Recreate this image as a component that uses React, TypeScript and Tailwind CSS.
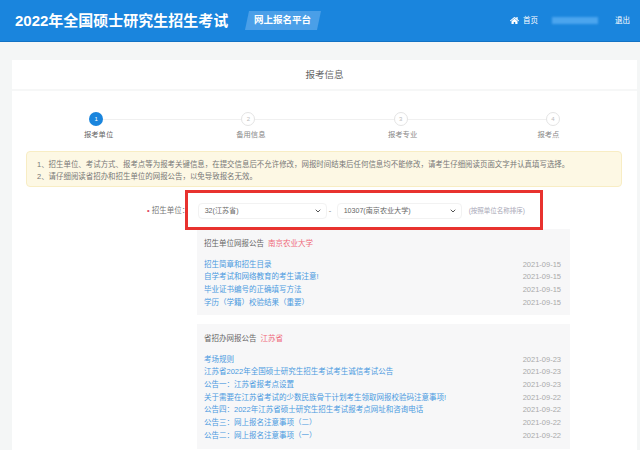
import { ChevronDown } from 'lucide-react';
import { FaHome } from 'react-icons/fa';

const font = { fontFamily: '"Liberation Sans", "Noto Sans CJK SC", sans-serif' };

const steps = [
  { label: '报考单位', nudge: 'ml-[5px]' },
  { label: '备用信息', nudge: 'ml-[5px]' },
  { label: '报考专业', nudge: 'ml-[4px]' },
  { label: '报考点', nudge: '-ml-[9px]' },
];

const unitNotices = [
  ['招生简章和招生目录', '2021-09-15'],
  ['自学考试和网络教育的考生请注意!', '2021-09-15'],
  ['毕业证书编号的正确填写方法', '2021-09-15'],
  ['学历（学籍）校验结果（重要）', '2021-09-15'],
];

const provinceNotices = [
  ['考场规则', '2021-09-23'],
  ['江苏省2022年全国硕士研究生招生考试考生诚信考试公告', '2021-09-23'],
  ['公告一：江苏省报考点设置', '2021-09-23'],
  ['关于需要在江苏省考试的少数民族骨干计划考生领取网报校验码注意事项!', '2021-09-22'],
  ['公告四：2022年江苏省硕士研究生招生考试报考点网址和咨询电话', '2021-09-22'],
  ['公告三：网上报名注意事项（二）', '2021-09-22'],
  ['公告二：网上报名注意事项（一）', '2021-09-22'],
];

function Select({ value, width }: { value: string; width: string }) {
  return (
    <div className={`${width} h-4 flex items-center justify-between pl-[6px] pr-[3px] bg-white border border-[#f2f2f2] rounded-sm text-[7.1px] text-[#666]`}>
      <span>{value}</span>
      <ChevronDown className="w-2 h-2 mr-px text-[#555]" strokeWidth={3} />
    </div>
  );
}

function NoticePanel({ title, place, rows, className }: { title: string; place: string; rows: string[][]; className: string }) {
  return (
    <div className={`bg-[#f7f7f8] pl-[7px] pr-[9px] ${className}`}>
      <div className="h-[10px] flex items-center text-[7.5px] leading-none text-[#666]">
        {title}
        <span className="ml-1 text-[#ef6a7a]">{place}</span>
      </div>
      <div className="mt-[9px]">
        {rows.map(([text, date]) => (
          <div key={text} className="h-[12.7px] flex items-center justify-between text-[7.5px]">
            <span className="text-[#4a9ae0] whitespace-nowrap">{text}</span>
            <span className="text-[#aaa]">{date}</span>
          </div>
        ))}
      </div>
    </div>
  );
}

export default function App() {
  return (
    <div style={font} className="relative w-[640px] h-[450px] overflow-hidden bg-[#f4f6f6]">
      <header className="h-[42px] bg-[#1a85dd] border-b border-[#1272c4] flex items-center pl-[15px] pr-[10px] text-white">
        <h1 className="text-[15px] font-bold leading-none">2022年全国硕士研究生招生考试</h1>
        <div className="ml-[19px] w-[72px] h-[19px] bg-[#4a9fe8] -skew-x-12 flex items-center justify-center">
          <span className="skew-x-12 text-[9.5px] font-bold">网上报名平台</span>
        </div>
        <div className="ml-auto flex items-center text-[7.5px]">
          <FaHome className="w-[9px] h-[9px]" />
          <span className="ml-[4px]">首页</span>
          <div className="ml-[14px] w-[46px] h-[7px] bg-[#4ba5ee] blur-[1px]" />
          <span className="ml-[17px]">退出</span>
        </div>
      </header>

      <main className="ml-[12px] mt-[18px] w-[625px] h-[390px] bg-white">
        <div className="h-[31px] pt-px flex items-center justify-center border-b-2 border-[#f6f7f7] text-[9.5px] text-[#666]">
          报考信息
        </div>

        <div className="mt-[21px] ml-[8px] w-[609px] grid grid-cols-4">
          {steps.map(({ label, nudge }, i) => (
            <div key={label} className="relative flex flex-col items-center">
              {i > 0 && <div className="absolute top-[7px] right-1/2 w-full h-px bg-[#f0f0f0]" />}
              <div
                className={`relative z-10 w-[14px] h-[14px] rounded-full flex items-center justify-center text-[6px] ${
                  i === 0 ? 'bg-[#1a85dd] text-white' : 'bg-white border border-[#e4e4e4] text-[#bbb]'
                }`}
              >
                {i + 1}
              </div>
              <div className={`mt-[4px] text-[7.3px] leading-[10px] ${nudge} ${i === 0 ? 'text-[#666]' : 'text-[#888]'}`}>{label}</div>
            </div>
          ))}
        </div>

        <div className="mt-[11px] ml-[14px] w-[596px] h-[36px] bg-[#fdf8e4] border border-[#f8edc4] rounded-sm pl-[10px] pt-[7px] text-[7.45px] leading-[12px] text-[#777]">
          <p>1、招生单位、考试方式、报考点等为报考关键信息，在提交信息后不允许修改，网报时间结束后任何信息均不能修改，请考生仔细阅读页面文字并认真填写选择。</p>
          <p>2、请仔细阅读省招办和招生单位的网报公告，以免导致报名无效。</p>
        </div>

        <div className="mt-[16px] ml-[135px] h-4 flex items-center text-[7.5px]">
          <span className="text-[#e0455a] mr-[2px]">•</span>
          <span className="text-[#777] w-[46px]">招生单位：</span>
          <Select value="32(江苏省)" width="w-[129px]" />
          <span className="w-[10px] pl-[2px] text-[#888]">-</span>
          <Select value="10307(南京农业大学)" width="w-[125px]" />
          <span className="ml-[7px] text-[6.5px] text-[#a9a9b8]">(按照单位名称排序)</span>
        </div>

        <NoticePanel title="招生单位网报公告" place="南京农业大学" rows={unitNotices} className="mt-[10px] ml-[185px] w-[373px] h-[86px] pt-[10px]" />
        <NoticePanel title="省招办网报公告" place="江苏省" rows={provinceNotices} className="mt-[9px] ml-[185px] w-[373px] h-[125px] pt-[10px]" />
      </main>

      {/* red annotation drawn on the screenshot */}
      <div className="absolute left-[185px] top-[190px] w-[358px] h-[40px] border-[3px] border-[#e8322f]" />
    </div>
  );
}
